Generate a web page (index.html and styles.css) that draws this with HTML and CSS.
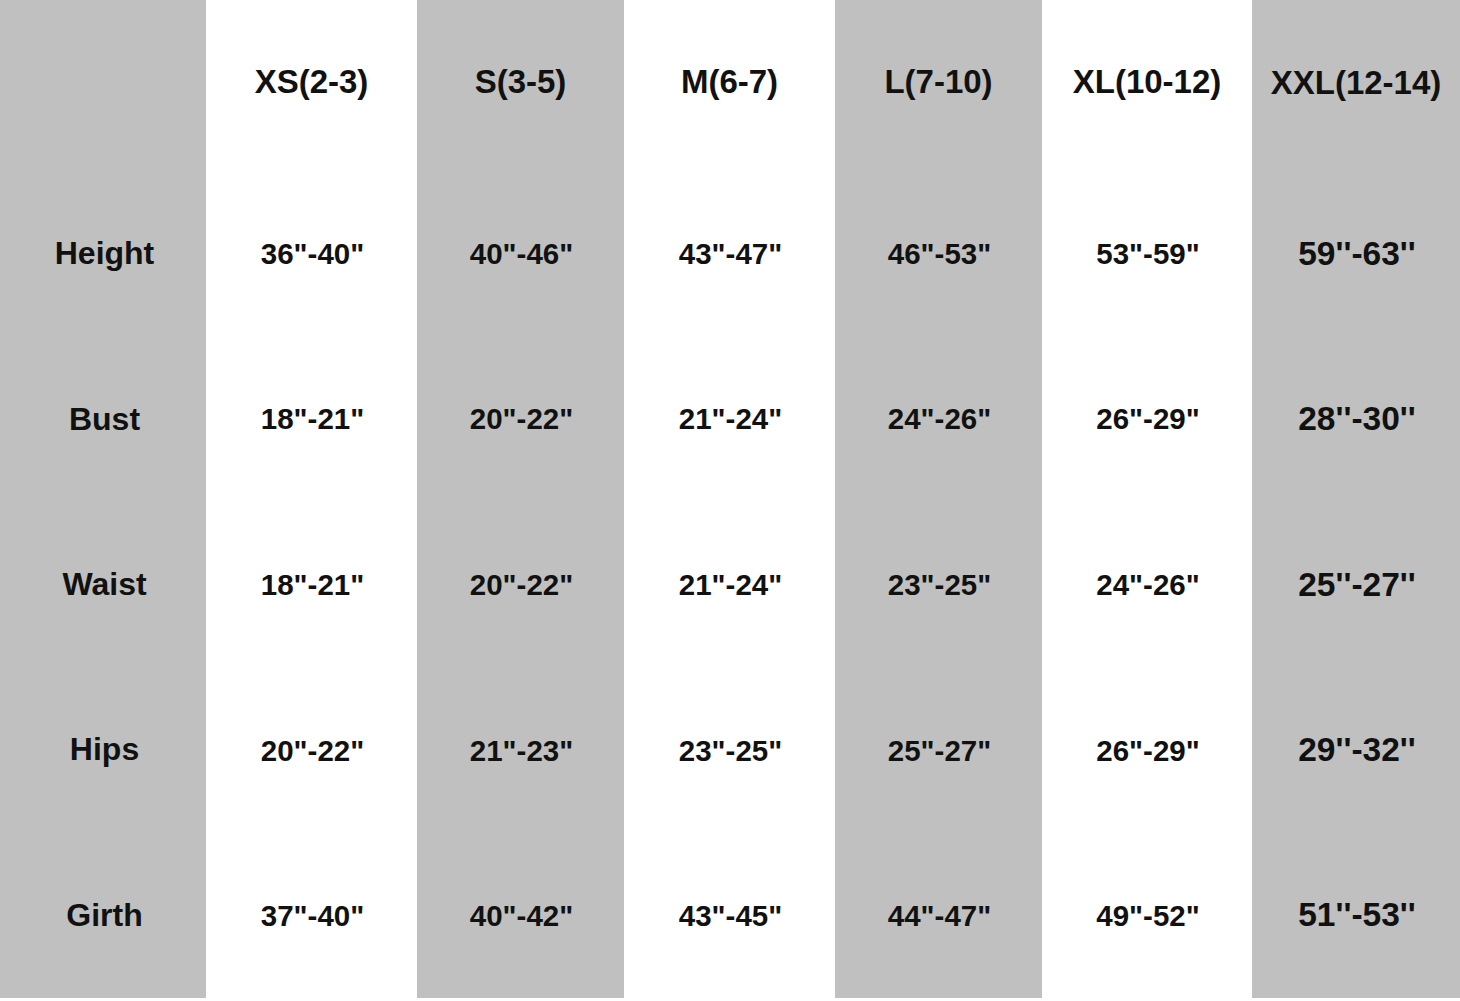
FILE: index.html
```html
<!DOCTYPE html>
<html>
<head>
<meta charset="utf-8">
<link rel="stylesheet" href="styles.css">
</head>
<body>
<div class="chart">
  <div class="col gray c0">
    <div class="cell head"></div>
    <div class="cell label">Height</div>
    <div class="cell label">Bust</div>
    <div class="cell label">Waist</div>
    <div class="cell label">Hips</div>
    <div class="cell label">Girth</div>
  </div>
  <div class="col white c1">
    <div class="cell head">XS(2-3)</div>
    <div class="cell val">36"-40"</div>
    <div class="cell val">18"-21"</div>
    <div class="cell val">18"-21"</div>
    <div class="cell val">20"-22"</div>
    <div class="cell val">37"-40"</div>
  </div>
  <div class="col gray c2">
    <div class="cell head">S(3-5)</div>
    <div class="cell val">40"-46"</div>
    <div class="cell val">20"-22"</div>
    <div class="cell val">20"-22"</div>
    <div class="cell val">21"-23"</div>
    <div class="cell val">40"-42"</div>
  </div>
  <div class="col white c3">
    <div class="cell head">M(6-7)</div>
    <div class="cell val">43"-47"</div>
    <div class="cell val">21"-24"</div>
    <div class="cell val">21"-24"</div>
    <div class="cell val">23"-25"</div>
    <div class="cell val">43"-45"</div>
  </div>
  <div class="col gray c4">
    <div class="cell head">L(7-10)</div>
    <div class="cell val">46"-53"</div>
    <div class="cell val">24"-26"</div>
    <div class="cell val">23"-25"</div>
    <div class="cell val">25"-27"</div>
    <div class="cell val">44"-47"</div>
  </div>
  <div class="col white c5">
    <div class="cell head">XL(10-12)</div>
    <div class="cell val">53"-59"</div>
    <div class="cell val">26"-29"</div>
    <div class="cell val">24"-26"</div>
    <div class="cell val">26"-29"</div>
    <div class="cell val">49"-52"</div>
  </div>
  <div class="col gray c6">
    <div class="cell head">XXL(12-14)</div>
    <div class="cell val big">59''-63''</div>
    <div class="cell val big">28''-30''</div>
    <div class="cell val big">25''-27''</div>
    <div class="cell val big">29''-32''</div>
    <div class="cell val big">51''-53''</div>
  </div>
</div>
</body>
</html>
```
FILE: styles.css
```css
html, body {
  margin: 0;
  padding: 0;
  background: #ffffff;
}
body {
  width: 1460px;
  height: 1001px;
  overflow: hidden;
  font-family: "Liberation Sans", Arial, sans-serif;
  font-weight: bold;
  color: #111111;
}
.chart {
  display: flex;
  height: 998px;
}
.col {
  display: flex;
  flex-direction: column;
}
.gray { background: #c0c0c0; }
.white { background: #ffffff; }
.c0 { width: 206px; }
.c1 { width: 211px; }
.c2 { width: 207px; }
.c3 { width: 211px; }
.c4 { width: 207px; }
.c5 { width: 210px; }
.c6 { width: 208px; }
.cell {
  flex: 1;
  display: flex;
  align-items: center;
  justify-content: center;
  white-space: nowrap;
}
.head {
  font-size: 33px;
  padding-bottom: 6px;
}
.label {
  font-size: 32px;
  padding-left: 3px;
}
.val {
  font-size: 29.5px;
  padding-top: 2px;
  padding-left: 2px;
}
.val.big {
  font-size: 33.5px;
  padding-top: 0;
}
```
